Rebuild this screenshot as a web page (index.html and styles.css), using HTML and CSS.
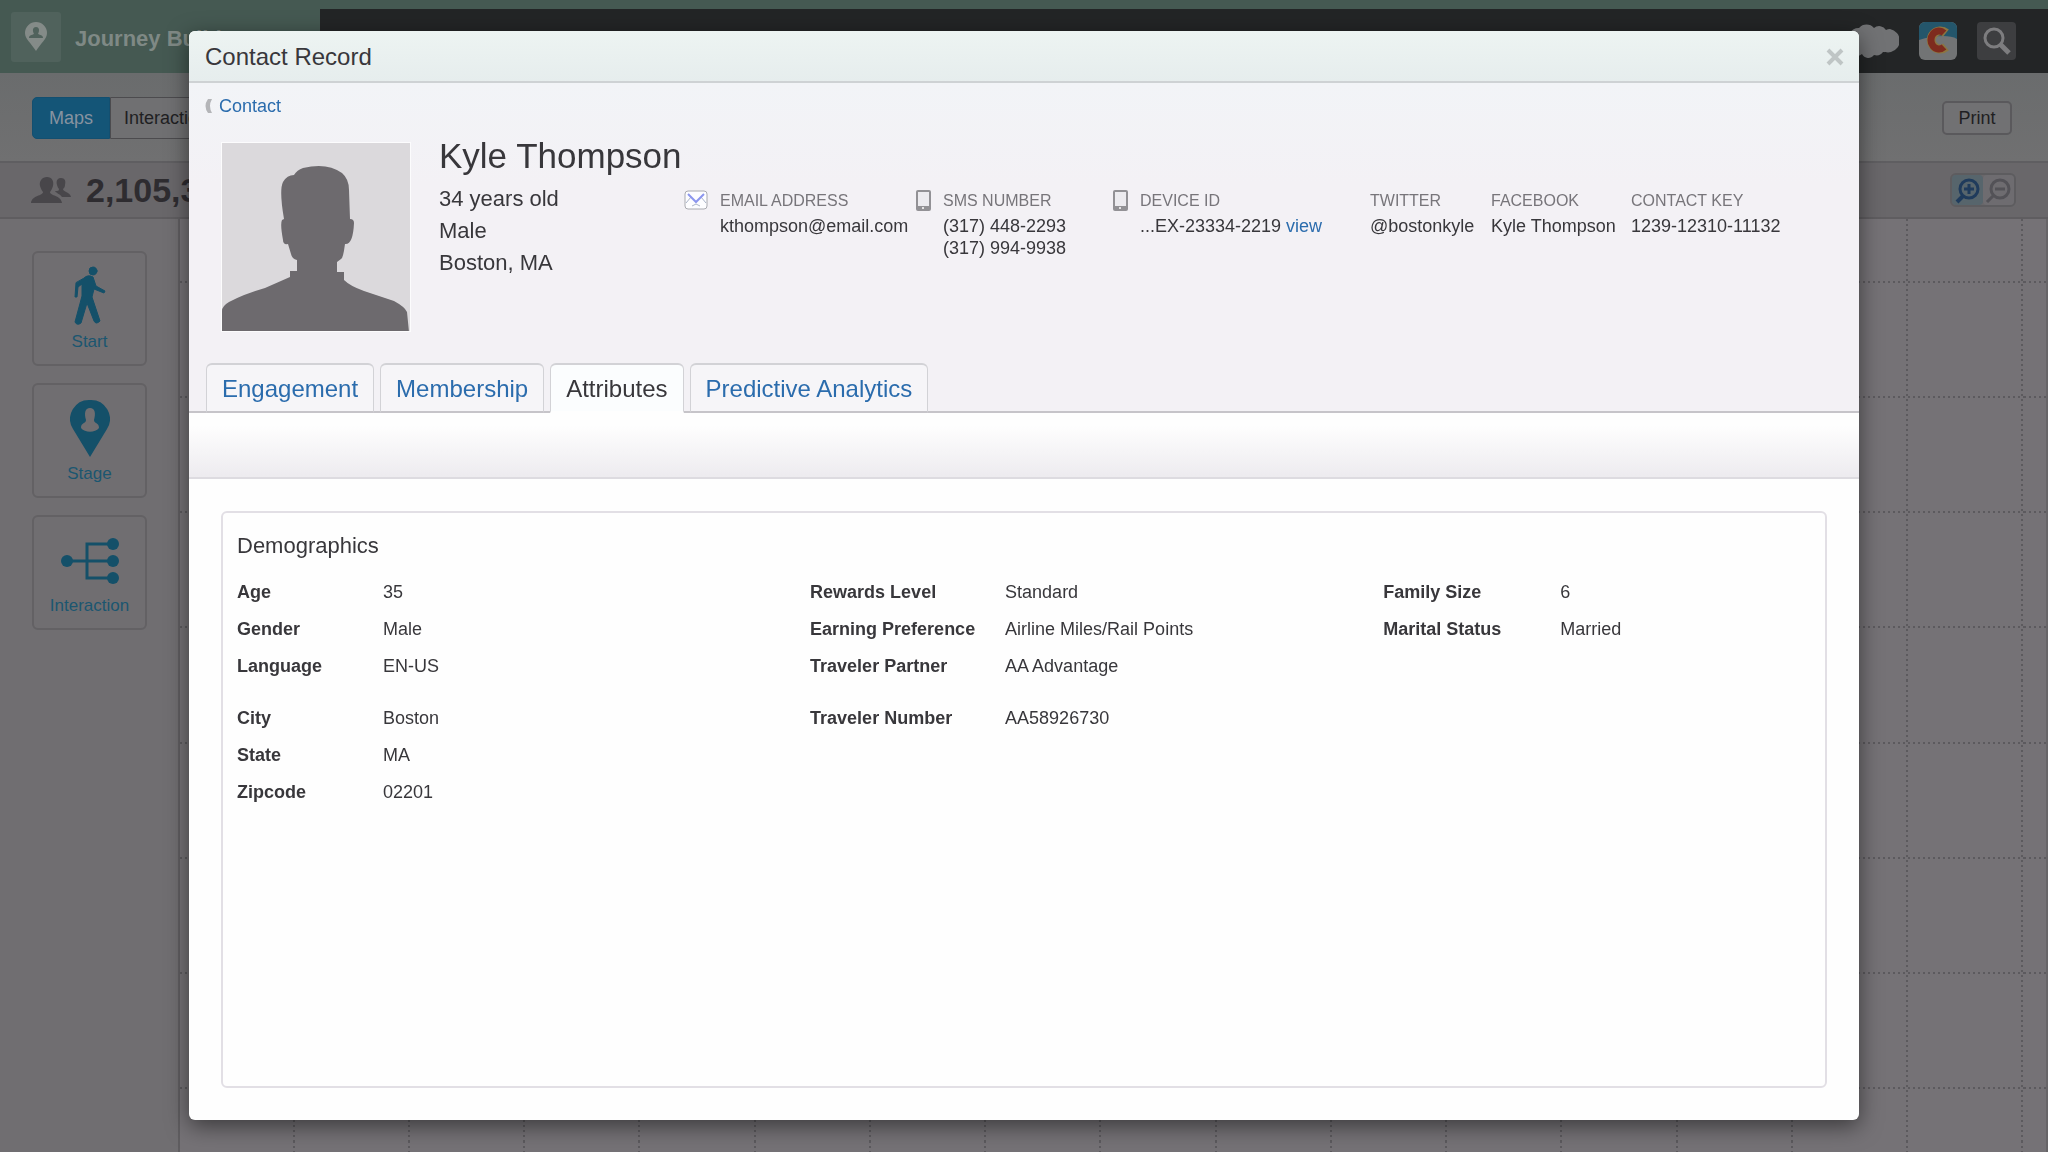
FILE: index.html
```html
<!DOCTYPE html>
<html lang="en">
<head>
<meta charset="utf-8">
<title>Contact Record</title>
<link rel="stylesheet" href="styles.css">
</head>
<body>
<div class="app">
  <header class="topbar">
    <div class="brand">
      <span class="brand-icon">
        <svg width="24" height="32" viewBox="0 0 24 32"><path fill="#848b88" fill-rule="evenodd" d="M12 1a11 11 0 0 1 11 11c0 6-6 10-11 18C7 22 1 18 1 12A11 11 0 0 1 12 1zM12 6c-3 0-4 3-2 7-2 1-5 1-5 4h14c0-3-3-3-5-4 2-4 1-7-2-7z"/></svg>
      </span>
      <span class="brand-name">Journey Builder</span>
    </div>
    <nav class="top-actions">
      <svg width="60" height="34" viewBox="-6 0 60 34"><path fill="#717274" d="M14 4a10 10 0 0 1 15 0 8 8 0 0 1 12 2 8 8 0 0 1 4-1 13 12 0 0 1 1 23c-3 1-6 0-8 0a8 8 0 0 1-9 3 7 7 0 0 1-12-1A8 8 0 0 1 4 24 10 10 0 0 1 5 9a10 10 0 0 1 9-5z"/></svg>
      <svg width="38" height="38" viewBox="0 0 38 38">
        <rect width="38" height="38" rx="6" fill="#727475"/>
        <path fill="#24566b" d="M6 0h26a6 6 0 0 1 6 6v11c-8-5-25-3-38 1V6a6 6 0 0 1 6-6z"/>
        <path fill="none" stroke="#8c7540" stroke-width="9" d="M27 11a9 9 0 1 0 0 14"/>
        <path fill="none" stroke="#7e2b1e" stroke-width="7" d="M25 11a8 9 0 1 0 0 14"/>
      </svg>
      <button class="search" aria-label="Search">
        <svg width="30" height="30" viewBox="0 0 30 30"><circle cx="12" cy="12" r="9" fill="none" stroke="#7d7d7f" stroke-width="3"/><path stroke="#7d7d7f" stroke-width="5" d="m18 18 9 9"/></svg>
      </button>
    </nav>
  </header>

  <div class="toolbar">
    <div class="segments">
      <button class="segment segment-on">Maps</button>
      <button class="segment">Interactions</button>
    </div>
    <button class="print">Print</button>
  </div>

  <div class="countbar">
    <div class="count">
      <svg width="40" height="28" viewBox="0 0 40 28"><g fill="#48464a"><path d="M16 1c5 0 7 4 6 9-1 3-2 5-3 6 0 4 11 3 12 11H0c1-8 12-7 12-11-1-1-2-3-3-6-1-5 2-9 7-9z"/><path d="M30 2c4 0 5 3 4 7 0 2-1 3-2 4 0 3 7 3 8 8h-9c-2-3-6-4-7-6 3 0 4 0 4-2-3-4-4-11 2-11z"/></g></svg>
      <span>2,105,3</span>
    </div>
    <div class="zoomers">
      <button class="zoomer zoomer-on" aria-label="Zoom in">
        <svg width="28" height="28" viewBox="0 0 28 28"><g fill="none" stroke="#1f3b5c"><circle cx="15" cy="13" r="9" stroke-width="3"/><path stroke-width="4" d="m9 20-6 6"/><path stroke-width="3" d="M10 13h10M15 8v10"/></g></svg>
      </button>
      <button class="zoomer" aria-label="Zoom out">
        <svg width="28" height="28" viewBox="0 0 28 28"><g fill="none" stroke="#535257"><circle cx="15" cy="13" r="9" stroke-width="3"/><path stroke-width="3" d="m8 20-6 6M10 13h10"/></g></svg>
      </button>
    </div>
  </div>

  <div class="workspace">
    <aside class="palette">
      <button class="tile">
        <svg width="34" height="60" viewBox="0 0 34 60"><g fill="#145069" stroke="#145069" stroke-linejoin="round" stroke-linecap="round"><circle cx="20" cy="5" r="4"/><path d="M11 12q4-4 9-1l3 9 9 5-1 2-10-4-2 8 8 24q-4 4-6 0l-7-18-6 20q-4 3-6-1l7-26V18l-4 3-1 10H2l1-14z"/></g></svg>
        <span>Start</span>
      </button>
      <button class="tile">
        <svg width="40" height="60" viewBox="0 0 40 60"><path fill="#145069" d="M20 2a19 19 0 0 1 17 29L20 59 3 31A19 19 0 0 1 20 2z"/><path fill="#706e71" d="M20 10c5 0 6 5 4 12 0 4 5 2 5 8-4 5-14 5-18 0 0-6 5-4 5-8-2-7-1-12 4-12z"/></svg>
        <span>Stage</span>
      </button>
      <button class="tile">
        <svg width="60" height="60" viewBox="0 0 60 60"><g fill="#145069"><circle cx="7" cy="31" r="6"/><circle cx="53" cy="14" r="6"/><circle cx="53" cy="31" r="6"/><circle cx="53" cy="48" r="6"/></g><path fill="none" stroke="#145069" stroke-width="3" d="M7 31h46M53 14H27v34h26"/></svg>
        <span>Interaction</span>
      </button>
    </aside>
    <main class="canvas">
      <svg class="grid" width="100%" height="100%">
        <defs>
          <pattern id="lines" width="461" height="461" patternUnits="userSpaceOnUse">
            <path fill="none" stroke="#5c5a5e" stroke-width="2" stroke-dasharray="2 3" d="M114 0v461M229 0v461M344 0v461M459 0v461M0 63h461M0 178h461M0 293h461M0 408h461"/>
          </pattern>
        </defs>
        <rect width="100%" height="100%" fill="url(#lines)"/>
      </svg>
    </main>
  </div>
</div>

<div class="overlay">
  <section class="modal" role="dialog" aria-labelledby="modal-title">
    <header class="modal-head">
      <h1 id="modal-title">Contact Record</h1>
      <button class="close" aria-label="Close">
        <svg width="18" height="18" viewBox="0 0 18 18"><path stroke="#bfc5c5" stroke-width="4" d="m2 2 14 14M16 2 2 16"/></svg>
      </button>
    </header>

    <div class="record">
      <a class="back" href="#">
        <svg width="8" height="16" viewBox="0 0 8 16"><path fill="#b4b5b8" d="M3 1h4Q3 8 7 15H3Q-2 8 3 1z"/></svg>
        Contact
      </a>

      <div class="profile">
        <svg class="avatar" viewBox="0 0 188 188"><path fill="#6d6a6e" d="M0 188v-20q0-5 7-9 15-8 36-14l25-11v-6h7v-11q-5-1-6-6l-3-10q-5 1-5-4-3-16-1-20l2-1q-5-29-1-37 4-7 11-7 3-5 9-7 24-6 39 5 7 6 7 17l1 29q4 0 4 4-1 22-9 21-2 15-4 15l-4 3v10h7v8q6 6 20 11l30 10q11 6 13 11l2 20z"/></svg>
        <div class="about">
          <h2>Kyle Thompson</h2>
          <div class="facts">
            <ul class="vitals">
              <li>34 years old</li>
              <li>Male</li>
              <li>Boston, MA</li>
            </ul>
            <dl class="contacts">
              <div class="contact">
                <svg class="mail" width="24" height="20" viewBox="0 0 24 20"><rect x="1" y="1" width="22" height="18" rx="3" fill="#fdfdff" stroke="#a9aab0"/><path fill="none" stroke="#aab4c8" d="m2 13 5-6M22 13l-5-6M8 16l4-2 4 2"/><path fill="none" stroke="#8c96ee" stroke-width="2" d="m4 4 8 8 8-8"/></svg>
                <div><dt>EMAIL ADDRESS</dt><dd>kthompson@email.com</dd></div>
              </div>
              <div class="contact">
                <svg width="15" height="21" viewBox="0 0 15 21"><rect width="15" height="21" rx="2" fill="#929195"/><path fill="#ecebef" d="M2 2h11v14H2z"/><circle cx="7" cy="18" r="1" fill="#fff"/></svg>
                <div><dt>SMS NUMBER</dt><dd>(317) 448-2293</dd><dd>(317) 994-9938</dd></div>
              </div>
              <div class="contact">
                <svg width="15" height="21" viewBox="0 0 15 21"><rect width="15" height="21" rx="2" fill="#929195"/><path fill="#ecebef" d="M2 2h11v14H2z"/><circle cx="7" cy="18" r="1" fill="#fff"/></svg>
                <div><dt>DEVICE ID</dt><dd>...EX-23334-2219 <a href="#">view</a></dd></div>
              </div>
              <div class="contact"><div><dt>TWITTER</dt><dd>@bostonkyle</dd></div></div>
              <div class="contact"><div><dt>FACEBOOK</dt><dd>Kyle Thompson</dd></div></div>
              <div class="contact"><div><dt>CONTACT KEY</dt><dd>1239-12310-11132</dd></div></div>
            </dl>
          </div>
        </div>
      </div>

      <nav class="tabs">
        <a class="tab" href="#">Engagement</a>
        <a class="tab" href="#">Membership</a>
        <a class="tab tab-on" href="#">Attributes</a>
        <a class="tab" href="#">Predictive Analytics</a>
      </nav>
    </div>

    <div class="strip"></div>

    <div class="panel">
      <h3>Demographics</h3>
      <div class="columns">
        <dl class="attrs attrs-a">
          <dt>Age</dt><dd>35</dd>
          <dt>Gender</dt><dd>Male</dd>
          <dt>Language</dt><dd>EN-US</dd>
          <dt class="break">City</dt><dd class="break">Boston</dd>
          <dt>State</dt><dd>MA</dd>
          <dt>Zipcode</dt><dd>02201</dd>
        </dl>
        <dl class="attrs attrs-b">
          <dt>Rewards Level</dt><dd>Standard</dd>
          <dt>Earning Preference</dt><dd>Airline Miles/Rail Points</dd>
          <dt>Traveler Partner</dt><dd>AA Advantage</dd>
          <dt class="break">Traveler Number</dt><dd class="break">AA58926730</dd>
        </dl>
        <dl class="attrs attrs-c">
          <dt>Family Size</dt><dd>6</dd>
          <dt>Marital Status</dt><dd>Married</dd>
        </dl>
      </div>
    </div>
  </section>
</div>
</body>
</html>
```
FILE: styles.css
```css
* {
  box-sizing: border-box;
}

body,
h1,
h2,
h3,
ul,
dl,
dd {
  margin: 0;
  padding: 0;
}

body {
  font-family: "Liberation Sans", Arial, sans-serif;
  font-size: 18px;
  color: #38373b;
  background: #706e71;
}

button {
  font: inherit;
  margin: 0;
  padding: 0;
}

svg {
  display: block;
  flex: none;
}

a {
  color: #2b6cad;
  text-decoration: none;
}

/* Dimmed application behind the dialog */

.app {
  display: flex;
  flex-direction: column;
  height: 100vh;
  overflow: hidden;
}

.topbar {
  display: flex;
  height: 73px;
  flex: none;
  background: #455952;
}

.brand {
  display: flex;
  align-items: center;
  gap: 14px;
  width: 320px;
  padding-left: 11px;
}

.brand-icon {
  display: grid;
  place-items: center;
  width: 50px;
  height: 50px;
  border-radius: 3px;
  background: #50625c;
}

.brand-name {
  padding-top: 4px;
  font-size: 22px;
  font-weight: bold;
  color: #7f8985;
}

.top-actions {
  display: flex;
  flex: 1;
  align-items: center;
  justify-content: flex-end;
  gap: 20px;
  margin-top: 9px;
  padding: 0 32px 0 0;
  background: #232526;
}

.search {
  display: grid;
  place-items: center;
  width: 39px;
  height: 38px;
  border: 0;
  border-radius: 4px;
  background: #3d3e40;
}

.toolbar {
  display: flex;
  flex: none;
  align-items: center;
  justify-content: space-between;
  height: 90px;
  padding: 2px 36px 0 32px;
  border-bottom: 2px solid #5f5e61;
  background: linear-gradient(#6a6c6d, #707071);
}

.segments {
  display: flex;
}

.segment {
  height: 42px;
  padding: 0 13px;
  border: 1px solid #4c4b4e;
  border-radius: 0 5px 5px 0;
  background: #707072;
  color: #1f1f22;
}

.segment-on {
  width: 78px;
  border-color: #134f70;
  border-radius: 5px 0 0 5px;
  background: #145577;
  color: #8793a0;
}

.print {
  width: 70px;
  height: 34px;
  border: 2px solid #5a595c;
  border-radius: 5px;
  background: #717173;
  color: #1f1f22;
}

.countbar {
  display: flex;
  flex: none;
  align-items: center;
  justify-content: space-between;
  height: 56px;
  padding: 0 32px 0 31px;
  border-bottom: 2px solid #5f5d60;
  background: #69676a;
}

.count {
  display: flex;
  align-items: center;
  gap: 15px;
  font-size: 34px;
  font-weight: bold;
  color: #2e2c30;
}

.zoomers {
  display: flex;
  height: 34px;
  border: 2px solid #5d5c5f;
  border-radius: 6px;
}

.zoomer {
  display: grid;
  place-items: center;
  width: 31px;
  border: 0;
  border-radius: 4px;
  background: #6e6c70;
}

.zoomer-on {
  background: #57656c;
}

.workspace {
  display: flex;
  flex: 1;
  min-height: 0;
}

.palette {
  display: flex;
  flex: none;
  flex-direction: column;
  gap: 17px;
  width: 180px;
  padding: 32px 0 0 32px;
  border-right: 2px solid #5f5d60;
  background: #706e71;
}

.tile {
  display: flex;
  flex-direction: column;
  align-items: center;
  gap: 4px;
  width: 115px;
  height: 115px;
  padding-top: 13px;
  border: 2px solid #636164;
  border-radius: 6px;
  background: #706e71;
  font-size: 17px;
  line-height: 24px;
  color: #1b5670;
}

.canvas {
  flex: 1;
  border-right: 2px solid #676568;
  background: #757276;
}

/* Dialog */

.overlay {
  position: fixed;
  inset: 0;
  display: flex;
  padding: 31px 189px 32px;
}

.modal {
  display: flex;
  flex: 1;
  flex-direction: column;
  min-width: 0;
  overflow: hidden;
  border-radius: 6px;
  background: #fefefe;
  box-shadow: 0 6px 22px rgba(0, 0, 0, 0.5);
}

.modal-head {
  display: flex;
  align-items: center;
  justify-content: space-between;
  height: 52px;
  flex: none;
  padding: 1px 15px 0 16px;
  border-bottom: 2px solid #ced2d4;
  background: linear-gradient(#edf4f2, #e6eded);
}

h1 {
  font-size: 24px;
  font-weight: normal;
}

.close {
  border: 0;
  background: none;
}

.record {
  background: linear-gradient(#f2f4f7, #f3f1f5 100px);
}

.back {
  display: flex;
  align-items: center;
  gap: 6px;
  padding: 11px 0 0 16px;
  line-height: 24px;
}

.profile {
  display: flex;
  gap: 29px;
  padding: 25px 0 0 33px;
}

.avatar {
  width: 188px;
  height: 188px;
  outline: 1px solid #fcfcfd;
  background: #dbd9dc;
}

.about {
  flex: 1;
}

h2 {
  font-size: 35px;
  font-weight: normal;
  line-height: 26px;
}

.facts {
  display: flex;
  padding-top: 14px;
}

.vitals {
  flex: none;
  width: 245px;
  list-style: none;
  font-size: 22px;
  line-height: 32px;
}

.contacts {
  display: grid;
  grid-template-columns: 232px 197px 257px 121px 140px auto;
  padding-top: 7px;
  line-height: 22px;
  white-space: nowrap;
}

.contact {
  display: flex;
  gap: 12px;
}

.contact dt {
  margin-bottom: 3px;
  font-size: 16px;
  color: #77757a;
}

.tabs {
  display: flex;
  gap: 6px;
  padding: 32px 17px 0;
  box-shadow: inset 0 -2px #c6c4c9;
}

.tab {
  height: 50px;
  padding: 0 15px;
  border: 1px solid #d2d2d6;
  border-top-width: 2px;
  border-bottom: 2px solid #c6c4c9;
  border-radius: 6px 6px 0 0;
  background: #f6f5f8;
  font-size: 24px;
  line-height: 47px;
}

.tab-on {
  border-bottom-color: #fefefe;
  background: #fbfdfe;
  color: #38373b;
}

.strip {
  flex: none;
  height: 66px;
  border-bottom: 2px solid #dddbe0;
  background: linear-gradient(#fefefe 20%, #edebef);
}

.panel {
  flex: 1;
  margin: 32px;
  padding: 17px 12px 16px 14px;
  border: 2px solid #e2dfe5;
  border-radius: 6px;
}

h3 {
  font-size: 22px;
  font-weight: normal;
  line-height: 32px;
}

.columns {
  display: grid;
  grid-template-columns: 4fr 4fr 3fr;
  padding-top: 12px;
}

.attrs {
  display: grid;
  align-content: start;
  line-height: 37px;
}

.attrs-a {
  grid-template-columns: 146px 1fr;
}

.attrs-b {
  grid-template-columns: 195px 1fr;
}

.attrs-c {
  grid-template-columns: 177px 1fr;
}

.attrs dt {
  font-weight: bold;
}

.attrs .break {
  padding-top: 15px;
}
```
